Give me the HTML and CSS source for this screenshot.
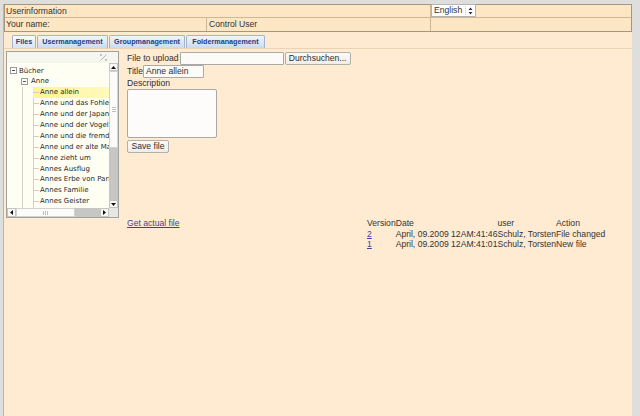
FILE: index.html
```html
<!DOCTYPE html>
<html>
<head>
<meta charset="utf-8">
<link rel="stylesheet" href="styles.css">
</head>
<body>
<div class="page">
  <div class="userinfo">
    <div class="cell span2">Userinformation</div>
    <div class="cell lang">
      <span class="select"><span class="sel-text">English</span><span class="sel-arrows"><svg width="5" height="8" viewBox="0 0 5 8"><path d="M2.5 0.5 L4.5 3 H0.5Z M0.5 5 H4.5 L2.5 7.5Z" fill="#333"/></svg></span></span>
    </div>
    <div class="cell">Your name:</div>
    <div class="cell name">Control User</div>
    <div class="cell"></div>
  </div>

  <div class="tabs">
    <span class="tab t-files active">Files</span>
    <span class="tab t-user">Usermanagement</span>
    <span class="tab t-group">Groupmanagement</span>
    <span class="tab t-folder">Foldermanagement</span>
  </div>

  <div class="panel">
    <div class="tree">
      <div class="tree-bar">
        <svg class="bar-icon" width="7" height="7" viewBox="0 0 7 7"><path d="M0.5 6.5 L6.5 0.5" stroke="#b4b4b4" stroke-width="1"/><rect x="0" y="0" width="2" height="2" fill="#c4c4c4"/><rect x="5" y="5" width="2" height="2" fill="#c4c4c4"/></svg>
      </div>
      <div class="tree-mid">
        <div class="tree-body">
          <div class="node lvl0"><span class="tog"></span>Bücher</div>
          <div class="node lvl1"><span class="tog"></span>Anne</div>
          <div class="leaf sel">Anne allein</div>
          <div class="leaf">Anne und das Fohlen</div>
          <div class="leaf">Anne und der Japaner</div>
          <div class="leaf">Anne und der Vogel</div>
          <div class="leaf">Anne und die fremde Frau</div>
          <div class="leaf">Anne und er alte Mann</div>
          <div class="leaf">Anne zieht um</div>
          <div class="leaf">Annes Ausflug</div>
          <div class="leaf">Annes Erbe von Paris</div>
          <div class="leaf">Annes Familie</div>
          <div class="leaf">Annes Geister</div>
        </div>
        <div class="vscroll">
          <span class="sbtn"><svg width="5" height="3" viewBox="0 0 5 3"><path d="M2.5 0 L5 3 H0Z" fill="#111"/></svg></span>
          <span class="vthumb"><span class="grip-v"></span></span>
          <span class="vtrack"></span>
          <span class="sbtn"><svg width="5" height="3" viewBox="0 0 5 3"><path d="M0 0 H5 L2.5 3Z" fill="#111"/></svg></span>
        </div>
      </div>
      <div class="tree-foot">
        <div class="hscroll">
          <span class="sbtn"><svg width="3" height="5" viewBox="0 0 3 5"><path d="M0 2.5 L3 0 V5Z" fill="#111"/></svg></span>
          <span class="hthumb"><span class="grip-h"></span></span>
          <span class="htrack"></span>
          <span class="sbtn"><svg width="3" height="5" viewBox="0 0 3 5"><path d="M0 0 L3 2.5 L0 5Z" fill="#111"/></svg></span>
        </div>
        <div class="corner"></div>
      </div>
    </div>

    <div class="form">
      <div class="frow first">
        <span class="label">File to upload</span><span class="input file-input"></span><span class="btn browse">Durchsuchen...</span>
      </div>
      <div class="frow">
        <span class="label">Title</span><span class="input title-input">Anne allein</span>
      </div>
      <div class="label block">Description</div>
      <div class="textarea"></div>
      <span class="btn save">Save file</span>
    </div>

    <div class="bottom">
      <div class="link-col"><a class="link" href="#">Get actual file</a></div>
      <table class="versions">
        <tr><th>Version</th><th>Date</th><th>user</th><th>Action</th></tr>
        <tr><td><a class="link" href="#">2</a></td><td>April, 09.2009 12AM:41:46</td><td>Schulz, Torsten</td><td>File changed</td></tr>
        <tr><td><a class="link" href="#">1</a></td><td>April, 09.2009 12AM:41:01</td><td>Schulz, Torsten</td><td>New file</td></tr>
      </table>
    </div>
  </div>
</div>
</body>
</html>
```

FILE: styles.css
```css
html, body {
  margin: 0;
  padding: 0;
}
body {
  background: #dedfdc;
  font-family: "Liberation Sans", Arial, sans-serif;
  font-size: 8.6px;
  color: #333;
  padding-top: 4px;
}
.page {
  margin: 0 8px 0 3px;
  border-left: 1px solid #b9b5ab;
  background: #feebd2;
  height: 412px;
}

/* header */
.userinfo {
  display: grid;
  grid-template-columns: 201px 223px 1fr;
  grid-template-rows: 12px 13px;
  gap: 1px;
  background: #cdb794;
  border: 1px solid #a5967e;
}
.cell {
  background: #fde6c4;
  padding: 0 1px;
  line-height: 12px;
  white-space: nowrap;
}
.cell.span2 { grid-column: span 2; }
.cell.name { padding-left: 2px; line-height: 13px; }
.userinfo .cell:nth-child(4) { line-height: 13px; }
.cell.lang { padding: 0; position: relative; }
.select {
  position: absolute;
  left: 0;
  top: -1px;
  width: 45px;
  height: 13px;
  box-sizing: border-box;
  border: 1px solid #b4b4b4;
  background: #fff;
  display: flex;
  align-items: center;
  line-height: 11px;
}
.sel-text { padding-left: 2px; flex: 1; }
.sel-arrows {
  width: 9px;
  height: 9px;
  border-left: 1px dotted #c8c8c8;
  display: flex;
  align-items: center;
  justify-content: center;
}

/* tabs */
.tabs {
  display: flex;
  align-items: flex-end;
  gap: 1px;
  height: 13px;
  padding: 3px 0 0 8px;
  border-bottom: 1px solid #ead4b4;
  background: #feead0;
}
.tab {
  height: 13px;
  box-sizing: border-box;
  border: 1px solid #a3b4cc;
  border-bottom: none;
  border-radius: 2px 2px 0 0;
  background: linear-gradient(#f1f5fb, #cbdaef);
  color: #1b3b82;
  font-weight: bold;
  font-size: 7.2px;
  line-height: 12px;
  text-align: center;
  white-space: nowrap;
}
.tab.active { background: linear-gradient(#f8fafd, #d8e3f3); }
.t-files { width: 24px; }
.t-user { width: 71px; }
.t-group { width: 76px; }
.t-folder { width: 79px; }

/* panel */
.panel {
  display: grid;
  grid-template-columns: 113px 1fr;
  column-gap: 8px;
  padding: 2px 0 0 2px;
}

/* tree */
.tree {
  grid-column: 1;
  grid-row: 1;
  width: 113px;
  height: 167px;
  box-sizing: border-box;
  border: 1px solid #a2a29c;
  background: #fefef2;
  display: flex;
  flex-direction: column;
}
.tree-bar {
  height: 11px;
  background: #f6f6f1;
  display: flex;
  justify-content: flex-end;
  align-items: center;
  padding-right: 11px;
}
.tree-mid {
  height: 145px;
  display: flex;
}
.tree-body {
  width: 102px;
  overflow: hidden;
  white-space: nowrap;
  font-family: "DejaVu Sans", Verdana, sans-serif;
  font-size: 7px;
  color: #2a2a2a;
  padding-top: 2.5px;
  box-sizing: border-box;
  background:
    linear-gradient(#d3d3ca, #d3d3ca) no-repeat 15px 24px / 1px 100%,
    linear-gradient(#d3d3ca, #d3d3ca) no-repeat 26px 24px / 1px 100%;
}
.node, .leaf {
  height: 10.9px;
  line-height: 10.9px;
}
.node { display: flex; align-items: center; }
.lvl0 { padding-left: 3px; }
.lvl0 .tog { margin-right: 2px; }
.lvl1 { padding-left: 14px; }
.lvl1 .tog { margin-right: 3px; }
.tog {
  width: 7px;
  height: 7px;
  box-sizing: border-box;
  border: 1px solid #9a9a9a;
  background: linear-gradient(#555, #555) no-repeat center / 3px 1px, #fff;
  flex: none;
}
.leaf {
  padding-left: 33px;
  background: linear-gradient(#cfcfc6, #cfcfc6) no-repeat 26px 50% / 6px 1px;
}
.leaf.sel {
  background:
    linear-gradient(#cfcfc6, #cfcfc6) no-repeat 26px 50% / 6px 1px,
    linear-gradient(to right, #fff590, #fffbcc) no-repeat 26px 0 / 100% 100%;
}

/* scrollbars */
.vscroll {
  width: 9px;
  display: flex;
  flex-direction: column;
  background: #c8c8c6;
}
.sbtn {
  width: 9px;
  height: 8px;
  box-sizing: border-box;
  border: 1px solid #c4c4c0;
  background: #f7f7f5;
  display: flex;
  align-items: center;
  justify-content: center;
  flex: none;
}
.vthumb {
  height: 77px;
  box-sizing: border-box;
  border: 1px solid #d2d2ce;
  background: #fbfbf9;
  display: flex;
  align-items: center;
  justify-content: center;
}
.grip-v {
  width: 4px;
  height: 5px;
  background: repeating-linear-gradient(#c0c0c0 0 1px, transparent 1px 2px);
}
.vtrack { flex: 1; background: #c6c6c4; }
.tree-foot { height: 9px; display: flex; }
.hscroll { width: 102px; display: flex; }
.hscroll .sbtn { width: 9px; height: 9px; }
.hthumb {
  width: 59px;
  box-sizing: border-box;
  border: 1px solid #d2d2ce;
  background: #fbfbf9;
  display: flex;
  align-items: center;
  justify-content: center;
}
.grip-h {
  width: 5px;
  height: 4px;
  background: repeating-linear-gradient(to right, #c0c0c0 0 1px, transparent 1px 2px);
}
.htrack { width: 25px; background: #c6c6c4; }
.corner { width: 9px; background: #e6e6e2; }

/* form */
.form {
  grid-column: 2;
  grid-row: 1;
  display: flex;
  flex-direction: column;
  align-items: flex-start;
  color: #2e2e2e;
}
.frow {
  display: flex;
  align-items: center;
  height: 13px;
}
.frow.first { margin-top: 1px; }
.label { white-space: nowrap; line-height: 13px; }
.label.block { line-height: 11px; }
.input {
  height: 13px;
  box-sizing: border-box;
  border: 1px solid #aaa9a6;
  background: #fdfbf8;
  border-radius: 1px;
  line-height: 11px;
  padding-left: 2px;
  white-space: nowrap;
}
.file-input { width: 104px; margin-left: 1px; }
.title-input { width: 61px; }
.btn {
  height: 13px;
  box-sizing: border-box;
  border: 1px solid #b3b0a9;
  border-radius: 2px;
  background: linear-gradient(#fbfaf7, #efede8);
  line-height: 11px;
  text-align: center;
  white-space: nowrap;
}
.browse { width: 66px; margin-left: 1px; }
.textarea {
  width: 90px;
  height: 49px;
  box-sizing: border-box;
  border: 1px solid #aaa9a6;
  border-radius: 2px;
  background: #fefcfa;
}
.save { width: 42px; margin-top: 2px; }

/* bottom */
.bottom {
  grid-column: 2;
  grid-row: 2;
  display: flex;
  align-items: flex-start;
  line-height: 10.5px;
}
.link-col { width: 240px; }
.link { color: #3f3f9d; text-decoration: underline; }
.versions {
  border-collapse: collapse;
  font-size: 8.6px;
  color: #333;
}
.versions th, .versions td {
  padding: 0;
  text-align: left;
  font-weight: normal;
  white-space: nowrap;
  line-height: 10.5px;
}
```
